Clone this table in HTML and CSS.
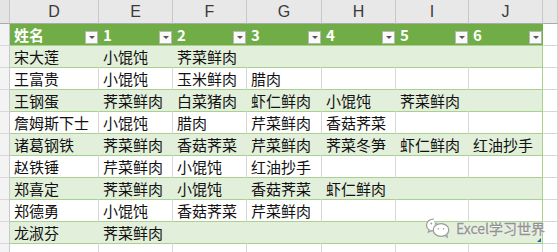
FILE: index.html
```html
<!DOCTYPE html>
<html lang="zh">
<head>
    <meta charset="UTF-8">
    <title>Excel 表格</title>
    <link rel="stylesheet" href="styles.css">
</head>
<body>
    <div class="sheet">
        <!-- 列标 -->
        <div class="col-head corner"></div>
        <div class="col-head">D</div>
        <div class="col-head">E</div>
        <div class="col-head">F</div>
        <div class="col-head">G</div>
        <div class="col-head">H</div>
        <div class="col-head">I</div>
        <div class="col-head">J</div>
        <div class="col-head"></div>

        <!-- 表头 -->
        <div class="row-head"></div>
        <div class="th">姓名<span class="drop"></span></div>
        <div class="th">1<span class="drop"></span></div>
        <div class="th">2<span class="drop"></span></div>
        <div class="th">3<span class="drop"></span></div>
        <div class="th">4<span class="drop"></span></div>
        <div class="th">5<span class="drop"></span></div>
        <div class="th">6<span class="drop"></span></div>
        <div class="cell out"></div>

        <div class="row-head"></div>
        <div class="cell band">宋大莲</div><div class="cell band">小馄饨</div><div class="cell band">荠菜鲜肉</div><div class="cell band"></div><div class="cell band"></div><div class="cell band"></div><div class="cell band last"></div>
        <div class="cell out"></div>

        <div class="row-head"></div>
        <div class="cell">王富贵</div><div class="cell">小馄饨</div><div class="cell">玉米鲜肉</div><div class="cell">腊肉</div><div class="cell"></div><div class="cell"></div><div class="cell last"></div>
        <div class="cell out"></div>

        <div class="row-head"></div>
        <div class="cell band">王钢蛋</div><div class="cell band">荠菜鲜肉</div><div class="cell band">白菜猪肉</div><div class="cell band">虾仁鲜肉</div><div class="cell band">小馄饨</div><div class="cell band">荠菜鲜肉</div><div class="cell band last"></div>
        <div class="cell out"></div>

        <div class="row-head"></div>
        <div class="cell">詹姆斯下士</div><div class="cell">小馄饨</div><div class="cell">腊肉</div><div class="cell">芹菜鲜肉</div><div class="cell">香菇荠菜</div><div class="cell"></div><div class="cell last"></div>
        <div class="cell out"></div>

        <div class="row-head"></div>
        <div class="cell band">诸葛钢铁</div><div class="cell band">荠菜鲜肉</div><div class="cell band">香菇荠菜</div><div class="cell band">芹菜鲜肉</div><div class="cell band">荠菜冬笋</div><div class="cell band">虾仁鲜肉</div><div class="cell band last">红油抄手</div>
        <div class="cell out"></div>

        <div class="row-head"></div>
        <div class="cell">赵铁锤</div><div class="cell">芹菜鲜肉</div><div class="cell">小馄饨</div><div class="cell">红油抄手</div><div class="cell"></div><div class="cell"></div><div class="cell last"></div>
        <div class="cell out"></div>

        <div class="row-head"></div>
        <div class="cell band">郑喜定</div><div class="cell band">荠菜鲜肉</div><div class="cell band">小馄饨</div><div class="cell band">香菇荠菜</div><div class="cell band">虾仁鲜肉</div><div class="cell band"></div><div class="cell band last"></div>
        <div class="cell out"></div>

        <div class="row-head"></div>
        <div class="cell">郑德勇</div><div class="cell">小馄饨</div><div class="cell">香菇荠菜</div><div class="cell">芹菜鲜肉</div><div class="cell"></div><div class="cell"></div><div class="cell last"></div>
        <div class="cell out"></div>

        <div class="row-head"></div>
        <div class="cell band">龙淑芬</div><div class="cell band">荠菜鲜肉</div><div class="cell band"></div><div class="cell band"></div><div class="cell band"></div><div class="cell band"></div><div class="cell band last"><span class="resize"></span></div>
        <div class="cell out"></div>

        <div class="row-head"></div>
        <div class="cell out"></div><div class="cell out"></div><div class="cell out"></div><div class="cell out"></div><div class="cell out"></div><div class="cell out"></div><div class="cell out"></div>
        <div class="cell out"></div>
    </div>

    <div class="watermark">
        <svg width="26" height="22" viewBox="0 0 26 22">
            <path d="M9 2C4.6 2 1.5 4.8 1.5 8.2c0 1.9 1 3.5 2.6 4.6L3.4 15l2.7-1.4c.9.3 1.9.4 2.9.4" fill="#fff" stroke="#9a9a9a" stroke-width="1.2"/>
            <ellipse cx="16" cy="13" rx="7.8" ry="6.3" fill="#fff" stroke="#9a9a9a" stroke-width="1.2"/>
            <path d="M20 18.4l2.2 1.8-.3-2.9" fill="#fff" stroke="#9a9a9a" stroke-width="1.2"/>
            <circle cx="6.3" cy="6.5" r="0.9" fill="#9a9a9a"/>
            <circle cx="11" cy="6.5" r="0.9" fill="#9a9a9a"/>
            <circle cx="13.4" cy="11.8" r="0.8" fill="#9a9a9a"/>
            <circle cx="18.6" cy="11.8" r="0.8" fill="#9a9a9a"/>
        </svg>
        <span class="wm-text">Excel学习世界</span>
    </div>
</body>
</html>
```

FILE: styles.css
```css
* {
    margin: 0;
    padding: 0;
    box-sizing: border-box;
}

body {
    background: #ffffff;
    width: 558px;
    height: 252px;
    overflow: hidden;
    position: relative;
    font-family: "Noto Sans CJK SC", "Liberation Sans", sans-serif;
    color: #111;
}

.sheet {
    display: grid;
    grid-template-columns: 10px 89px 74px 74px 75px 74px 73px 74px 1fr;
    grid-template-rows: 24px;
    grid-auto-rows: 22px;
    height: 252px;
    overflow: hidden;
}

.col-head {
    background: #e8e8e8;
    border-right: 1px solid #c8c8c8;
    border-bottom: 1px solid #aaaaaa;
    font-family: "Liberation Sans", sans-serif;
    font-size: 16px;
    color: #3a3a3a;
    text-align: center;
    line-height: 24px;
}

.corner {
    background: #e4e4e4;
}

.row-head {
    background: #f3f3f3;
    border-right: 1px solid #c8c8c8;
    border-bottom: 1px solid #d8d8d8;
}

.th {
    position: relative;
    background: #70ad47;
    border-bottom: 1px solid #a9d08e;
    color: #ffffff;
    font-weight: bold;
    font-size: 15px;
    line-height: 21px;
    padding-left: 4px;
}

.drop {
    position: absolute;
    right: 1px;
    top: 7px;
    width: 13px;
    height: 13px;
    background: #fafafa;
    border: 1px solid #b8b8b8;
}

.drop::after {
    content: "";
    position: absolute;
    left: 3px;
    top: 4px;
    border-left: 3px solid transparent;
    border-right: 3px solid transparent;
    border-top: 3px solid #555;
}

.cell {
    border-right: 1px solid #d6d6d6;
    border-bottom: 1px solid #a9d08e;
    font-size: 15px;
    line-height: 21px;
    padding-left: 4px;
    white-space: nowrap;
    overflow: hidden;
}

.band {
    background: #e2efda;
    border-right-color: #e2efda;
}

.last {
    position: relative;
    border-right: 1px solid #a9d08e;
    overflow: visible;
}

.out {
    border-right-color: #d6d6d6;
    border-bottom-color: #d6d6d6;
}

.resize {
    position: absolute;
    right: 1px;
    bottom: 1px;
    width: 0;
    height: 0;
    border-left: 4px solid transparent;
    border-bottom: 4px solid #3060a8;
}

.watermark {
    position: absolute;
    left: 425px;
    top: 217px;
    display: flex;
    align-items: center;
    gap: 5px;
}

.wm-text {
    font-family: "Noto Sans CJK SC", "Liberation Sans", sans-serif;
    font-size: 14px;
    color: #9a9a9a;
    -webkit-text-stroke: 0.3px #8a8a8a;
    text-shadow: 0 0 2px #ffffff, 0 0 2px #ffffff;
}
```
